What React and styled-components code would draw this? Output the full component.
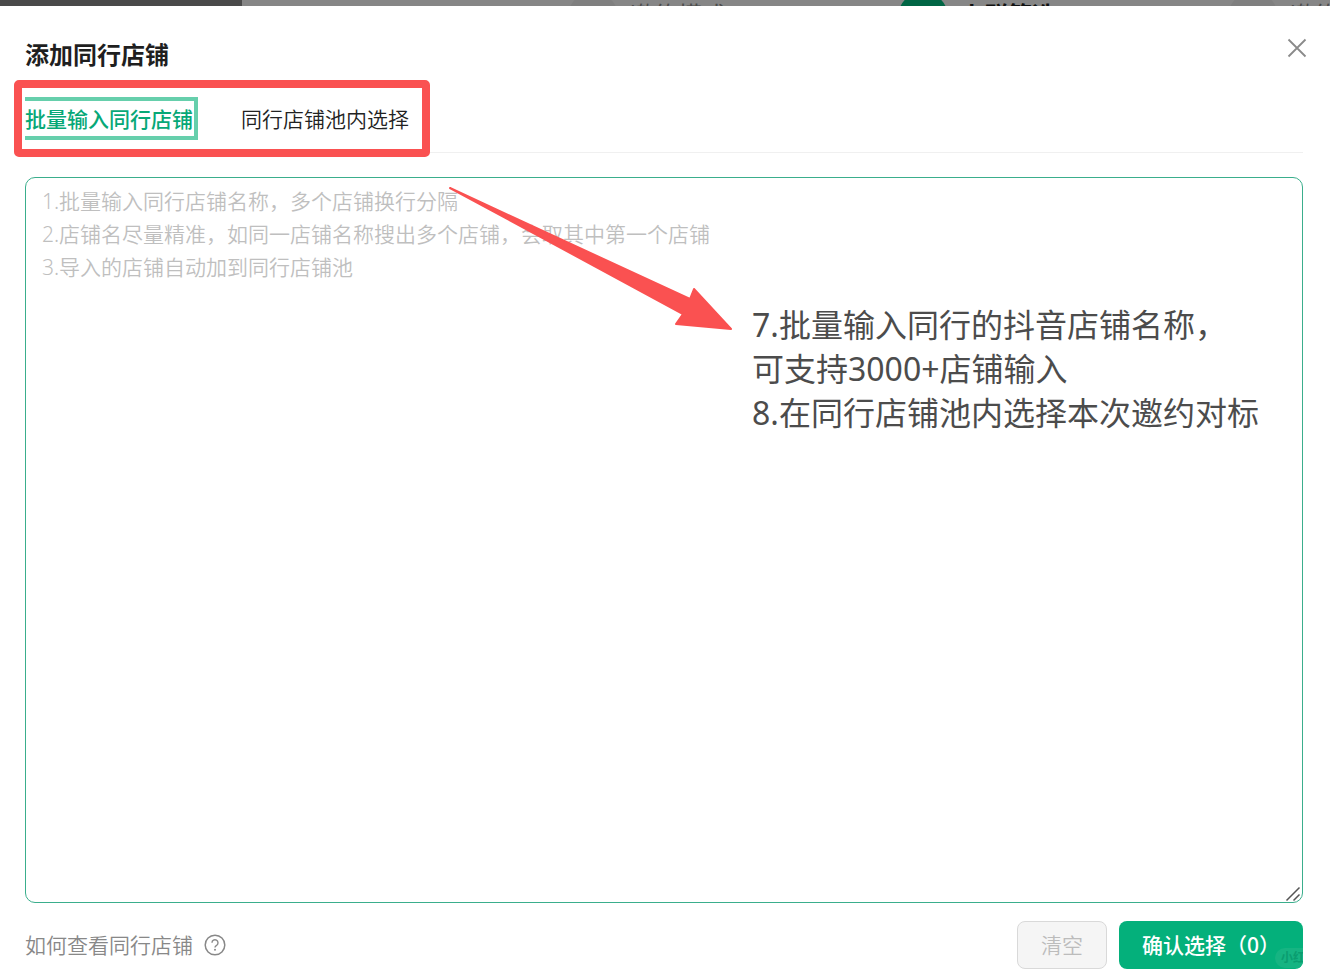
import React, { useState } from 'react';
import styled, { createGlobalStyle } from 'styled-components';

const steps = [
  { label: '邀约模式' },
  { label: '人群筛选', active: true },
  { label: '邀约内容' },
];

const tabs = ['批量输入同行店铺', '同行店铺池内选择'];

const placeholder = [
  '1.批量输入同行店铺名称，多个店铺换行分隔',
  '2.店铺名尽量精准，如同一店铺名称搜出多个店铺，会取其中第一个店铺',
  '3.导入的店铺自动加到同行店铺池',
].join('\n');

export default function App() {
  const [current, setCurrent] = useState(0);
  const [value, setValue] = useState('');
  const count = value.split('\n').filter((line) => line.trim()).length;

  return (
    <>
      <GlobalStyle />
      <Page>
        <Backdrop aria-hidden="true">
          <Sidebar />
          <Steps>
            {steps.map((step, index) => (
              <Step key={index}>
                <StepDot $active={step.active} />
                <StepLabel $active={step.active}>{step.label}</StepLabel>
              </Step>
            ))}
          </Steps>
        </Backdrop>

        <Dialog role="dialog" aria-labelledby="dialog-title">
          <Header>
            <Title id="dialog-title">添加同行店铺</Title>
            <CloseBtn type="button" aria-label="关闭">
              <svg width="20" height="20" viewBox="0 0 20 20">
                <path
                  d="M1.5 1.5l17 17M18.5 1.5l-17 17"
                  stroke="#8a8a8a"
                  strokeWidth="1.8"
                />
              </svg>
            </CloseBtn>
          </Header>

          <Body>
            <TabBar>
              <TabGroup role="tablist">
                {tabs.map((tab, index) => (
                  <Tab
                    key={tab}
                    type="button"
                    role="tab"
                    aria-selected={current === index}
                    $active={current === index}
                    onClick={() => setCurrent(index)}
                  >
                    {tab}
                  </Tab>
                ))}
              </TabGroup>
            </TabBar>

            <Editor>
              <TextArea
                aria-label="同行店铺名称"
                placeholder={placeholder}
                value={value}
                onChange={(e) => setValue(e.target.value)}
              />
              <Grip width="16" height="16" viewBox="0 0 16 16">
                <path
                  d="M1.5 14.5l13-13M8.5 14.5l6-6"
                  stroke="#555"
                  strokeWidth="1.5"
                />
              </Grip>
              <Arrow width="290" height="150" viewBox="0 0 290 150">
                <path
                  d="M5 6L245 117L249 107L286 147L231 142L238 132Z"
                  fill="#fa5151"
                  stroke="#fa5151"
                  strokeWidth="2"
                  strokeLinejoin="round"
                />
              </Arrow>
              <Note>
                7.批量输入同行的抖音店铺名称，
                <br />
                可支持3000+店铺输入
                <br />
                8.在同行店铺池内选择本次邀约对标
              </Note>
            </Editor>

            <Footer>
              <HelpLink href="#help">
                如何查看同行店铺
                <svg width="22" height="22" viewBox="0 0 22 22" fill="none">
                  <circle cx="11" cy="11" r="9.8" stroke="#888" strokeWidth="1.5" />
                  <path
                    d="M8 8.8a3 3 0 1 1 4.6 2.5c-1 .6-1.6 1-1.6 2.2"
                    stroke="#888"
                    strokeWidth="1.4"
                  />
                  <circle cx="11" cy="15.8" r="1" fill="#888" />
                </svg>
              </HelpLink>
              <Actions>
                <ClearBtn type="button" disabled={!value} onClick={() => setValue('')}>
                  清空
                </ClearBtn>
                <ConfirmBtn type="button">
                  确认选择（{count}）<Watermark aria-hidden="true">小红书</Watermark>
                </ConfirmBtn>
              </Actions>
            </Footer>
          </Body>
        </Dialog>
      </Page>
    </>
  );
}

const GlobalStyle = createGlobalStyle`
  * {
    box-sizing: border-box;
  }

  body {
    margin: 0;
    background-color: #fff;
  }

  body, button, textarea {
    font-family: 'Noto Sans', 'Noto Sans CJK SC', sans-serif;
  }
`;

const Page = styled.div`
  min-height: 100vh;
  display: flex;
  flex-direction: column;
`;

const Backdrop = styled.div`
  height: 6px;
  display: flex;
  overflow: hidden;
  background-color: #868686;
`;

const Sidebar = styled.div`
  flex: 0 0 242px;
  background-color: #4a4a4a;
`;

const Steps = styled.div`
  display: flex;
  margin-top: -8px;
  padding-left: 326px;
`;

const Step = styled.div`
  flex: 0 0 330px;
  height: 50px;
  display: flex;
  gap: 12px;
`;

const StepDot = styled.span`
  width: 50px;
  height: 50px;
  border-radius: 50%;
  background-color: ${({ $active }) => ($active ? '#006544' : '#7f7f7f')};
`;

const StepLabel = styled.span`
  font-size: 24px;
  line-height: 46px;
  font-weight: ${({ $active }) => ($active ? 700 : 400)};
  color: ${({ $active }) => ($active ? '#111' : '#4c4c4c')};
`;

const Dialog = styled.section`
  flex: 1;
  display: flex;
  flex-direction: column;
  background-color: #fff;
`;

const Header = styled.header`
  display: flex;
  justify-content: space-between;
  align-items: flex-start;
  padding: 32px 23px 0 25px;
`;

const Title = styled.h1`
  margin: 0;
  font-size: 24px;
  line-height: 34px;
  font-weight: 700;
  color: #1f1f1f;
`;

const CloseBtn = styled.button`
  display: flex;
  padding: 0;
  border: none;
  background: none;
  cursor: pointer;
`;

const Body = styled.div`
  flex: 1;
  display: flex;
  flex-direction: column;
  padding: 25px 27px 11px 25px;
`;

const TabBar = styled.nav`
  padding-bottom: 12px;
  border-bottom: 1px solid #f0f0f0;
`;

const TabGroup = styled.div`
  position: relative;
  display: inline-flex;
  gap: 43px;
  vertical-align: top;

  &::after {
    content: '';
    position: absolute;
    inset: -17px -16px -17px -11px;
    border: 8px solid #fa5151;
    border-radius: 5px;
    pointer-events: none;
  }
`;

const Tab = styled.button`
  height: 43px;
  padding: 0 1px 0 0;
  border: 4px solid ${({ $active }) => ($active ? '#66cfac' : 'transparent')};
  border-left: none;
  background: none;
  font-size: 21px;
  line-height: 34px;
  font-weight: ${({ $active }) => ($active ? 500 : 350)};
  color: ${({ $active }) => ($active ? '#07a877' : '#222')};
  cursor: pointer;
`;

const Editor = styled.div`
  position: relative;
  flex: 1;
  display: flex;
  margin-top: 24px;
`;

const TextArea = styled.textarea`
  flex: 1;
  min-height: 320px;
  padding: 7px 16px;
  border: 1px solid #3aae8c;
  border-radius: 10px;
  outline: none;
  resize: none;
  font-size: 21px;
  line-height: 33px;
  font-weight: 350;
  color: #222;

  &::placeholder {
    color: #bfbfbf;
    opacity: 1;
  }
`;

const Grip = styled.svg`
  position: absolute;
  right: 2px;
  bottom: 1px;
`;

const Arrow = styled.svg`
  position: absolute;
  top: 5px;
  left: 420px;
  pointer-events: none;
`;

const Note = styled.p`
  position: absolute;
  top: 126px;
  left: 727px;
  margin: 0;
  font-size: 32px;
  line-height: 44px;
  font-weight: 400;
  white-space: nowrap;
  color: #4c4c4c;
  pointer-events: none;
`;

const Footer = styled.footer`
  display: flex;
  justify-content: space-between;
  align-items: center;
  margin-top: 18px;
`;

const HelpLink = styled.a`
  display: flex;
  align-items: center;
  gap: 11px;
  font-size: 21px;
  line-height: 34px;
  font-weight: 350;
  color: #888;
  text-decoration: none;
`;

const Actions = styled.div`
  display: flex;
  gap: 12px;
`;

const Button = styled.button`
  height: 48px;
  padding: 0 23px;
  border: none;
  border-radius: 8px;
  font-size: 21px;
  line-height: 34px;
  cursor: pointer;
`;

const ClearBtn = styled(Button)`
  border: 1px solid #d9d9d9;
  background-color: #f5f5f5;
  font-weight: 350;
  color: #bcbcbc;
`;

const ConfirmBtn = styled(Button)`
  position: relative;
  overflow: hidden;
  background-color: #04b07b;
  font-weight: 500;
  color: #fff;
`;

const Watermark = styled.span`
  position: absolute;
  right: -20px;
  bottom: 1px;
  padding: 0 6px;
  border-radius: 10px;
  background-color: #16b482;
  font-size: 12px;
  line-height: 20px;
  font-weight: 700;
  color: #0a9d70;
`;
